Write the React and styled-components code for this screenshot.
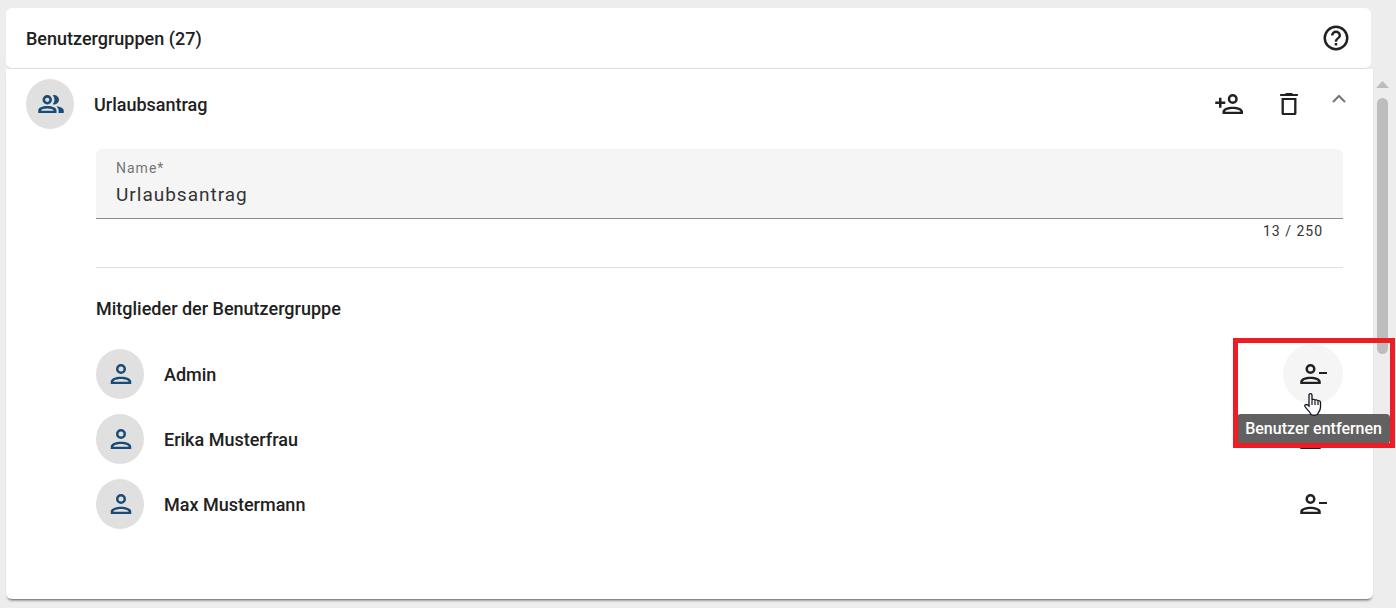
import styled, { createGlobalStyle } from "styled-components";

const GlobalStyle = createGlobalStyle`
  * {
    box-sizing: border-box;
  }

  body {
    margin: 0;
    background: #ededed;
    color: #212121;
    font-family: Roboto, "Liberation Sans", sans-serif;
    overflow: hidden;
  }
`;

const Page = styled.main`
  display: grid;
  grid-template-columns: 1fr 15px;
  column-gap: 2px;
  min-height: 100vh;
  padding: 8px 6px 9px 6px;
`;

const Panel = styled.section`
  display: flex;
  flex-direction: column;
`;

const Header = styled.header`
  display: flex;
  align-items: center;
  justify-content: space-between;
  height: 61px;
  margin-right: 2px;
  padding: 0 20px;
  background: #ffffff;
  border-bottom: 1px solid #dcdcdc;
  border-radius: 6px;
`;

const Title = styled.h1`
  margin: 0;
  padding-top: 2px;
  font-size: 18px;
  font-weight: 500;
  line-height: 24px;
`;

const Content = styled.div`
  flex: 1;
  padding: 10px 30px 60px 20px;
  background: #ffffff;
  border-radius: 0 0 6px 6px;
  box-shadow: 0 3px 3px -2px rgba(0, 0, 0, 0.65);
`;

const Row = styled.div`
  display: flex;
  align-items: center;
  gap: 20px;
  height: 50px;
`;

const Avatar = styled.span`
  display: flex;
  align-items: center;
  justify-content: center;
  width: 48px;
  height: 50px;
  padding-left: 2px;
  border-radius: 50%;
  background: #e0e0e0;
  color: #1a4b77;
`;

const Label = styled.span`
  flex: 1;
  padding-top: 2px;
  font-size: 18px;
  font-weight: 500;
  line-height: 24px;
`;

const GroupTitle = styled.h2`
  flex: 1;
  margin: 0;
  padding-top: 2px;
  font-size: 18px;
  font-weight: 500;
  line-height: 24px;
`;

const IconButton = styled.button`
  display: flex;
  align-items: center;
  justify-content: center;
  width: ${({ $size }) => $size || 60}px;
  height: ${({ $size }) => $size || 60}px;
  padding: 0;
  border: 0;
  border-radius: 50%;
  background: ${({ $active }) => ($active ? "#f5f5f5" : "transparent")};
  color: #212121;
  cursor: pointer;
`;

const Actions = styled.div`
  display: flex;
  align-items: center;
`;

const ToggleButton = styled(IconButton)`
  width: 20px;
  height: 20px;
  margin: 0 -6px 12px 10px;
  color: #757575;
`;

const Details = styled.div`
  padding: 20px 0 0 70px;
`;

const Field = styled.div`
  display: flex;
  flex-direction: column;
  height: 70px;
  padding: 10px 20px 4px;
  background: #f5f5f5;
  border-bottom: 1px solid #8c8c8c;
  border-radius: 6px 6px 0 0;
`;

const FieldLabel = styled.label`
  color: #757575;
  font-size: 14px;
  line-height: 18px;
  letter-spacing: 1px;
`;

const FieldInput = styled.input`
  height: 34px;
  padding: 0;
  border: 0;
  outline: 0;
  background: transparent;
  color: #333333;
  font-family: inherit;
  font-size: 19px;
  letter-spacing: 1px;
`;

const Counter = styled.div`
  padding: 2px 20px 0;
  color: #333333;
  font-size: 14px;
  line-height: 20px;
  letter-spacing: 1px;
  text-align: right;
`;

const Divider = styled.hr`
  margin: 26px 0 0;
  border: 0;
  border-top: 1px solid #dfdfdf;
`;

const MembersTitle = styled.h3`
  margin: 29px 0 28px;
  font-size: 18px;
  font-weight: 500;
  line-height: 24px;
`;

const Members = styled.ul`
  display: flex;
  flex-direction: column;
  gap: 15px;
  margin: 0;
  padding: 0;
  list-style: none;
`;

const ActionSlot = styled.div`
  position: relative;
`;

const Tooltip = styled.span`
  position: absolute;
  z-index: 1;
  top: 70px;
  right: -47px;
  padding: 0 8px;
  border-radius: 4px;
  background: #616161;
  color: #ffffff;
  font-size: 16px;
  font-weight: 500;
  line-height: 30px;
  white-space: nowrap;
`;

const Highlight = styled.div`
  position: absolute;
  z-index: 2;
  top: -6px;
  right: -52px;
  width: 162px;
  height: 110px;
  border: 5px solid #ee1c25;
  pointer-events: none;
`;

const Pointer = styled.svg`
  position: absolute;
  z-index: 3;
  top: 48px;
  left: 20px;
`;

const Scrollbar = styled.div`
  display: flex;
  flex-direction: column;
  align-items: center;
  gap: 10px;
  padding-top: 73px;
`;

const ScrollArrow = styled.svg`
  display: block;
`;

const ScrollThumb = styled.div`
  width: 11px;
  height: 256px;
  border-radius: 6px;
  background: #bdbdbd;
`;

const icons = {
  group:
    "M9 4.8A3.8 3.8 0 1 1 9 12.4A3.8 3.8 0 0 1 9 4.8M9 6.9A1.7 1.7 0 1 0 9 10.3A1.7 1.7 0 0 0 9 6.9M13.4 5A3.8 3.8 0 1 1 13.4 12.2A5.4 5.4 0 0 0 13.4 5M9 13.5C13 13.5 16.4 14.9 16.4 17V19.2H1.8V17C1.8 14.9 5 13.5 9 13.5M9 15.5C6.3 15.5 4.2 16.2 4 17.3H14.1C13.9 16.2 11.7 15.5 9 15.5M16.2 13.8C19.6 14.2 22.2 15.4 22.2 17.2V19.2H18.1V17.2C18.1 15.8 17.4 14.7 16.2 13.8Z",
  person:
    "M12 4A4 4 0 1 1 12 12A4 4 0 0 1 12 4M12 6A2 2 0 1 0 12 10A2 2 0 0 0 12 6M12 14.1C16.5 14.1 20.2 15.7 20.2 18V20H3.8V18C3.8 15.7 7.5 14.1 12 14.1M12 16C9 16 6.3 16.8 5.9 18.1H18.1C17.7 16.8 15 16 12 16Z",
  add: "M15 4A4 4 0 1 1 15 12A4 4 0 0 1 15 4M15 6A2 2 0 1 0 15 10A2 2 0 0 0 15 6M15 14.1C19.5 14.1 23.2 15.7 23.2 18V20H6.8V18C6.8 15.7 10.5 14.1 15 14.1M15 16C12 16 9.3 16.8 8.9 18.1H21.1C20.7 16.8 18 16 15 16M4 7H6V10H9V12H6V15H4V12H1V10H4Z",
  remove:
    "M10 4A4 4 0 1 1 10 12A4 4 0 0 1 10 4M10 6A2 2 0 1 0 10 10A2 2 0 0 0 10 6M10 14.1C14.5 14.1 18.2 15.7 18.2 18V20H1.8V18C1.8 15.7 5.5 14.1 10 14.1M10 16C7 16 4.3 16.8 3.9 18.1H16.1C15.7 16.8 13 16 10 16M16.8 10.4H23.2V12H16.8Z",
  trash:
    "M9 2.6H15V3.4H19.6V5.2H4.4V3.4H9ZM5.6 6.9H18.4V20C18.4 21 17.8 21.5 17 21.5H7C6.2 21.5 5.6 21 5.6 20ZM7.6 8.6V19.7H16.4V8.6Z",
  help: "M11 18H13V16H11V18M12 2A10 10 0 1 0 12 22A10 10 0 0 0 12 2M12 20A8 8 0 1 1 12 4A8 8 0 0 1 12 20M12 6A4 4 0 0 0 8 10H10A2 2 0 0 1 14 10C14 12 11 11.75 11 15H13C13 12.75 16 12.5 16 10A4 4 0 0 0 12 6Z",
};

const Icon = ({ name, size = 30 }) => (
  <svg width={size} height={size} viewBox="0 0 24 24" fill="currentColor" fillRule="evenodd" aria-hidden="true">
    <path d={icons[name]} />
  </svg>
);

const members = [
  { id: 1, name: "Admin", active: true },
  { id: 2, name: "Erika Musterfrau" },
  { id: 3, name: "Max Mustermann" },
];

const Member = ({ name, active }) => (
  <Row as="li">
    <Avatar>
      <Icon name="person" />
    </Avatar>
    <Label>{name}</Label>
    <ActionSlot>
      <IconButton type="button" aria-label={`Benutzer entfernen: ${name}`} $active={active}>
        <Icon name="remove" />
      </IconButton>
      {active && (
        <>
          <Tooltip role="tooltip">Benutzer entfernen</Tooltip>
          <Highlight />
          <Pointer width="20" height="24" viewBox="0 0 20 24" aria-hidden="true">
            <path
              d="M6 14V3.2C6 1 9 1 9 3.2V8.5C9 7 12 7 12 8.8C12 7.5 15 7.5 15 9.5C15 8.3 17.5 8.5 17.5 10.5V15C17.5 19 15.5 19.5 14.5 22.5C12.5 23.4 10 23.4 8 22.5C7 19.5 4 18 2 14.5C1 12.5 3.5 11.5 6 14Z"
              fill="#ffffff"
              stroke="#111122"
              strokeWidth="1.3"
            />
            <path d="M9 8.5V13M12 9V13M15 9.5V13" stroke="#111122" strokeWidth="1.2" />
          </Pointer>
        </>
      )}
    </ActionSlot>
  </Row>
);

const App = () => {
  return (
    <>
      <GlobalStyle />
      <Page>
        <Panel>
          <Header>
            <Title>Benutzergruppen (27)</Title>
            <IconButton type="button" aria-label="Hilfe" $size={30}>
              <Icon name="help" />
            </IconButton>
          </Header>
          <Content>
            <Row>
              <Avatar>
                <Icon name="group" />
              </Avatar>
              <GroupTitle>Urlaubsantrag</GroupTitle>
              <Actions>
                <IconButton type="button" aria-label="Benutzer hinzufügen">
                  <Icon name="add" />
                </IconButton>
                <IconButton type="button" aria-label="Gruppe löschen">
                  <Icon name="trash" size={28} />
                </IconButton>
                <ToggleButton type="button" aria-label="Zuklappen" aria-expanded="true">
                  <svg width="14" height="9" viewBox="0 0 14 9" fill="none" aria-hidden="true">
                    <path d="M1 8L7 2L13 8" stroke="currentColor" strokeWidth="2" />
                  </svg>
                </ToggleButton>
              </Actions>
            </Row>
            <Details>
              <Field>
                <FieldLabel htmlFor="group-name">Name*</FieldLabel>
                <FieldInput id="group-name" maxLength={250} defaultValue="Urlaubsantrag" />
              </Field>
              <Counter>13 / 250</Counter>
              <Divider />
              <MembersTitle>Mitglieder der Benutzergruppe</MembersTitle>
              <Members>
                {members.map((member) => (
                  <Member key={member.id} name={member.name} active={member.active} />
                ))}
              </Members>
            </Details>
          </Content>
        </Panel>
        <Scrollbar aria-hidden="true">
          <ScrollArrow width="13" height="7" viewBox="0 0 13 7">
            <path d="M0 7L6.5 0L13 7Z" fill="#bdbdbd" />
          </ScrollArrow>
          <ScrollThumb />
        </Scrollbar>
      </Page>
    </>
  );
};

export default App;
